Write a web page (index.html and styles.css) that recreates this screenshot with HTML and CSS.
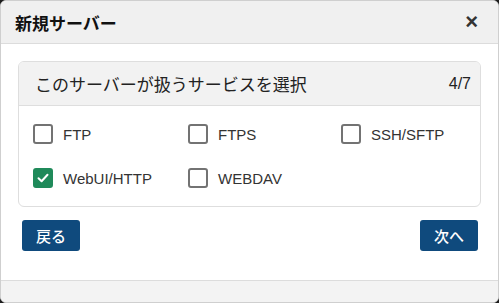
FILE: index.html
```html
<!DOCTYPE html>
<html>
<head>
    <title>新規サーバー</title>
    <link rel="stylesheet" href="styles.css">
</head>
<body>
    <div class="dialog">
        <div class="dialog-header">
            <h1>新規サーバー</h1>
            <span class="close">&times;</span>
        </div>

        <div class="dialog-body">
            <div class="card">
                <div class="card-header">
                    <span>このサーバーが扱うサービスを選択</span>
                    <span class="step">4/7</span>
                </div>
                <div class="card-body">
                    <label class="option"><span class="box"></span>FTP</label>
                    <label class="option"><span class="box"></span>FTPS</label>
                    <label class="option"><span class="box"></span>SSH/SFTP</label>
                    <label class="option">
                        <span class="box checked">
                            <svg width="14" height="14" viewBox="0 0 14 14"><path d="M2.5 7.2 L5.6 10.2 L11.5 3.8" fill="none" stroke="#fff" stroke-width="2" stroke-linecap="round" stroke-linejoin="round"/></svg>
                        </span>WebUI/HTTP
                    </label>
                    <label class="option"><span class="box"></span>WEBDAV</label>
                </div>
            </div>

            <div class="actions">
                <button class="btn">戻る</button>
                <button class="btn">次へ</button>
            </div>
        </div>

        <div class="dialog-footer"></div>
    </div>
</body>
</html>
```

FILE: styles.css
```css
html {
    background: #1e1e1e;
}

body {
    margin: 0;
    padding: 0;
    font-family: "Liberation Sans", "Noto Sans CJK JP", sans-serif;
    color: #222;
}

.dialog {
    height: 303px;
    box-sizing: border-box;
    background: white;
    border: 1px solid #cfcfcf;
    border-radius: 6px;
    overflow: hidden;
    display: flex;
    flex-direction: column;
}

.dialog-header {
    height: 42px;
    background: #f0f0f0;
    border-bottom: 1px solid #dcdcdc;
    display: flex;
    align-items: center;
    justify-content: space-between;
    padding: 0 20px 0 14px;
}

.dialog-header h1 {
    margin: 0;
    font-size: 17px;
    font-weight: bold;
    font-family: "Noto Sans CJK JP", sans-serif;
    color: #111;
}

.close {
    font-size: 22px;
    font-weight: bold;
    color: #333;
    line-height: 1;
}

.dialog-body {
    flex: 1;
    padding: 17px 17px 0;
}

.card {
    border: 1px solid #dedede;
    border-radius: 6px;
    overflow: hidden;
}

.card-header {
    height: 43px;
    background: #f2f2f2;
    border-bottom: 1px solid #dedede;
    display: flex;
    align-items: center;
    justify-content: space-between;
    padding: 0 9px 0 16px;
    font-size: 17px;
    font-family: "Noto Sans CJK JP", sans-serif;
    color: #222;
}

.card-header .step {
    font-family: "Liberation Sans", sans-serif;
    font-size: 16px;
}

.card-body {
    display: grid;
    grid-template-columns: 155px 153px 1fr;
    row-gap: 24px;
    padding: 18px 14px 18px;
}

.option {
    display: flex;
    align-items: center;
    gap: 10px;
    font-size: 15px;
    color: #333;
}

.box {
    width: 20px;
    height: 20px;
    box-sizing: border-box;
    border: 2px solid #737373;
    border-radius: 3px;
    display: flex;
    align-items: center;
    justify-content: center;
}

.box.checked {
    background: #1f8a5a;
    border-color: #1f8a5a;
}

.actions {
    display: flex;
    justify-content: space-between;
    padding: 13px 3px 0 4px;
}

.btn {
    height: 31px;
    width: 58px;
    border: none;
    border-radius: 3px;
    background: #0f4a7d;
    color: white;
    font-size: 15px;
    font-weight: 500;
    font-family: "Noto Sans CJK JP", sans-serif;
    padding: 0;
}

.dialog-footer {
    height: 21px;
    background: #f3f3f3;
    border-top: 1px solid #dcdcdc;
}
```
